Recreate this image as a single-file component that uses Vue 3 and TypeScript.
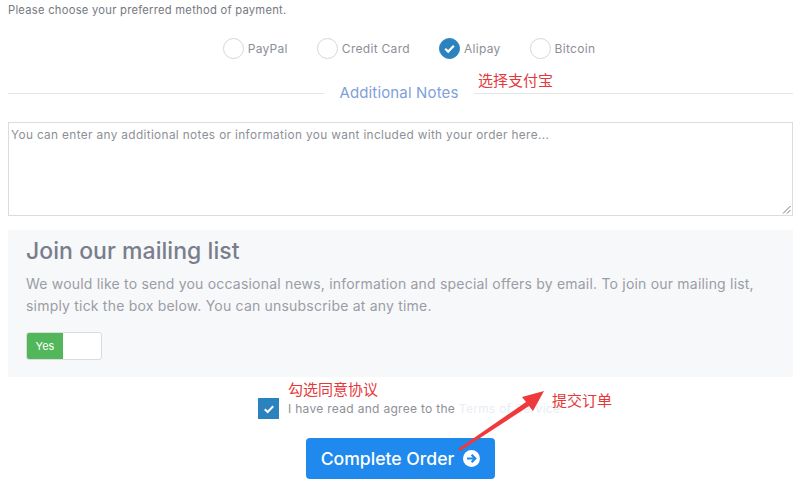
<script setup lang="ts">
const methods = [
  { label: 'PayPal', checked: false },
  { label: 'Credit Card', checked: false },
  { label: 'Alipay', checked: true },
  { label: 'Bitcoin', checked: false },
]
</script>

<template>
  <div class="page">
    <p class="intro">Please choose your preferred method of payment.</p>
    <div class="methods">
      <label v-for="m in methods" :key="m.label" class="method">
        <span class="radio" :class="{ on: m.checked }">
          <svg v-if="m.checked" width="13" height="13" viewBox="0 0 13 13"><path d="M2.2 6.8 5.2 9.6 10.8 3.8" fill="none" stroke="#fff" stroke-width="2.2"/></svg>
        </span>
        <span>{{ m.label }}</span>
      </label>
    </div>
    <div class="divider">
      <span class="line left"></span>
      <span class="divider-title">Additional Notes</span>
      <span class="line right"></span>
    </div>
    <div class="notes">
      <span>You can enter any additional notes or information you want included with your order here...</span>
      <svg class="grip" width="9" height="9" viewBox="0 0 9 9"><path d="M8.5 1 1 8.5M8.5 5 5 8.5" stroke="#777" stroke-width="1" fill="none"/></svg>
    </div>
    <section class="panel">
      <h2>Join our mailing list</h2>
      <p>We would like to send you occasional news, information and special offers by email. To join our mailing list, simply tick the box below. You can unsubscribe at any time.</p>
      <div class="toggle"><span class="yes">Yes</span></div>
    </section>
    <div class="agree">
      <span class="check">
        <svg width="12" height="12" viewBox="0 0 12 12"><path d="M1.8 6.2 4.6 9 10.2 3.2" fill="none" stroke="#fff" stroke-width="2"/></svg>
      </span>
      <span class="agree-text">I have read and agree to the <span class="terms">Terms of Service</span></span>
    </div>
    <div class="submit">
      <button class="order">
        Complete Order
        <svg width="17" height="17" viewBox="0 0 17 17"><circle cx="8.5" cy="8.5" r="8.5" fill="#fff"/><path d="M4 8.5H12M8.6 4.8 12.3 8.5 8.6 12.2" fill="none" stroke="#2089ee" stroke-width="2.2"/></svg>
      </button>
    </div>

    <span class="note n1">选择支付宝</span>
    <span class="note n2">勾选同意协议</span>
    <span class="note n3">提交订单</span>
    <svg class="arrow" width="800" height="490" viewBox="0 0 800 490">
      <path d="M458 449 526 402 522 397 544 391 533 411 529 406 460 451Z" fill="#ee3a3a"/>
    </svg>
  </div>
</template>

<style scoped>
.page {
  position: relative;
  width: 800px;
  height: 490px;
  overflow: hidden;
  background: #fff;
  box-sizing: border-box;
  padding: 3px 7px 0 8px;
  font-family: Inter, "Noto Sans", sans-serif;
  color: #81858f;
}
.intro {
  margin: 0;
  font-size: 11.2px;
  letter-spacing: 0.26px;
  line-height: 15px;
  color: #75787f;
}
.methods {
  display: flex;
  justify-content: center;
  gap: 29px;
  height: 22px;
  margin-top: 19px;
  padding-left: 17px;
}
.method {
  display: flex;
  align-items: center;
  gap: 4px;
  font-size: 12px;
  letter-spacing: 0.3px;
  color: #8c8f96;
}
.radio {
  width: 21px;
  height: 21px;
  box-sizing: border-box;
  border: 1px solid #d6d6d6;
  border-radius: 50%;
  display: flex;
  align-items: center;
  justify-content: center;
  background: #fff;
}
.radio.on {
  background: #2a82bf;
  border-color: #2a82bf;
}
.divider {
  display: flex;
  align-items: center;
  height: 24px;
  margin-top: 23px;
}
.line {
  height: 1px;
  background: #e6e6e6;
  margin-top: -1px;
}
.line.left { width: 316px; }
.line.right { flex: 1; }
.divider-title {
  width: 150px;
  text-align: center;
  font-size: 15px;
  letter-spacing: 0.15px;
  line-height: 20px;
  margin-top: -3px;
  color: #7f9fd8;
}
.notes {
  position: relative;
  box-sizing: border-box;
  height: 94px;
  margin-top: 16px;
  padding: 5px 2px;
  border: 1px solid #dcdcdc;
  font-size: 11.8px;
  letter-spacing: 0.36px;
  line-height: 14px;
  color: #8d9096;
}
.grip {
  position: absolute;
  right: 1px;
  bottom: 1px;
}
.panel {
  box-sizing: border-box;
  height: 147px;
  margin-top: 14px;
  padding: 7px 18px 0;
  background: #f7f8f9;
}
.panel h2 {
  margin: 0;
  font-size: 23px;
  letter-spacing: 0.05px;
  line-height: 28px;
  font-weight: 500;
  color: #7a7e8c;
}
.panel p {
  margin: 8px 0 0;
  font-size: 14px;
  letter-spacing: 0.2px;
  line-height: 22px;
  color: #9a9da6;
}
.toggle {
  box-sizing: border-box;
  width: 76px;
  height: 28px;
  margin-top: 15px;
  background: #fff;
  border: 1px solid #dcdcdc;
  border-radius: 3px;
  overflow: hidden;
}
.yes {
  display: block;
  width: 36px;
  height: 100%;
  background: #52b75a;
  color: #fff;
  font-size: 11px;
  line-height: 26px;
  text-align: center;
}
.agree {
  display: flex;
  align-items: center;
  gap: 9px;
  height: 21px;
  margin-top: 21px;
  padding-left: 250px;
}
.check {
  width: 21px;
  height: 21px;
  background: #2a82bf;
  display: flex;
  align-items: center;
  justify-content: center;
}
.agree-text {
  font-size: 12px;
  letter-spacing: 0.3px;
  color: #8d9096;
}
.terms {
  color: #e8edf3;
}
.submit {
  display: flex;
  padding-left: 298px;
  margin-top: 19px;
}
.order {
  display: flex;
  align-items: center;
  justify-content: center;
  gap: 9px;
  width: 189px;
  height: 41px;
  border: 0;
  border-radius: 4px;
  background: #2089ee;
  color: #fff;
  font-family: inherit;
  font-size: 17.6px;
  font-weight: 500;
  padding: 0;
}
.note {
  position: absolute;
  font-size: 15px;
  line-height: 18px;
  color: #e5383b;
  font-family: "Noto Sans CJK SC", sans-serif;
}
.n1 { left: 478px; top: 71px; }
.n2 { left: 288px; top: 380px; }
.n3 { left: 552px; top: 391px; }
.arrow {
  position: absolute;
  left: 0;
  top: 0;
  pointer-events: none;
}
</style>
